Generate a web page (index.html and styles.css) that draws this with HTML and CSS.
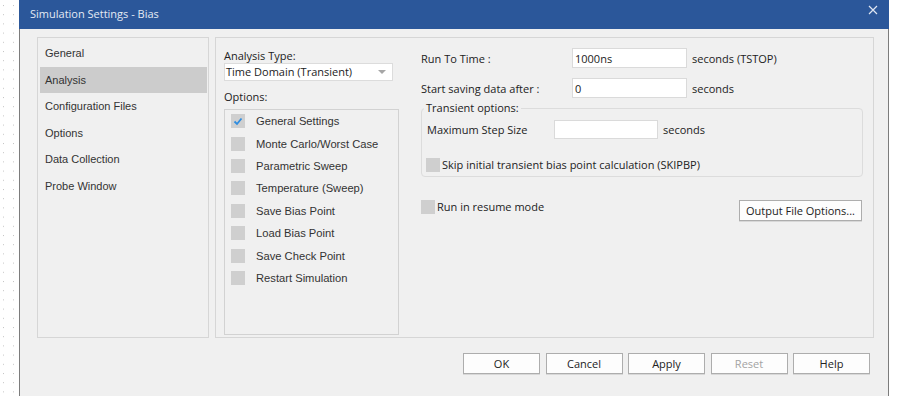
FILE: index.html
```html
<!DOCTYPE html>
<html>
<head>
<meta charset="utf-8" />
<title>Simulation Settings - Bias</title>
<link rel="stylesheet" href="styles.css">
</head>

<body>
<div class="screen">
  <div class="desk">
    <svg width="19" height="396">
      <defs>
        <pattern id="dots" width="10" height="9.2" patternUnits="userSpaceOnUse" x="3" y="5">
          <rect width="1" height="1" fill="#c4c4c4"></rect>
        </pattern>
      </defs>
      <rect width="19" height="396" fill="url(#dots)"></rect>
    </svg>
  </div>

  <div class="dialog">
    <div class="titlebar">
      <span class="title">Simulation Settings - Bias</span>
      <span class="close" title="Close">
        <svg width="10" height="10" viewBox="0 0 10 10"><path d="M1 1 L9 9 M9 1 L1 9" stroke="#dfe6f2" stroke-width="1.2" fill="none"/></svg>
      </span>
    </div>

    <div class="body">
      <div class="panels">
        <!-- 左侧分类 -->
        <ul class="nav">
          <li>General</li>
          <li class="on">Analysis</li>
          <li>Configuration Files</li>
          <li>Options</li>
          <li>Data Collection</li>
          <li>Probe Window</li>
        </ul>

        <div class="main">
          <div class="col-type">
            <div class="lbl">Analysis Type:</div>
            <div class="select">
              <span>Time Domain (Transient)</span>
              <s class="arrow"></s>
            </div>
            <div class="lbl lbl-opt">Options:</div>
            <ul class="optlist">
              <li><i class="chk checked"><svg width="14" height="14" viewBox="0 0 14 14"><path d="M3.5 7.5 L6 10 L10.5 4.5" stroke="#2f8de0" stroke-width="1.8" fill="none"/></svg></i>General Settings</li>
              <li><i class="chk"></i>Monte Carlo/Worst Case</li>
              <li><i class="chk"></i>Parametric Sweep</li>
              <li><i class="chk"></i>Temperature (Sweep)</li>
              <li><i class="chk"></i>Save Bias Point</li>
              <li><i class="chk"></i>Load Bias Point</li>
              <li><i class="chk"></i>Save Check Point</li>
              <li><i class="chk"></i>Restart Simulation</li>
            </ul>
          </div>

          <div class="col-run">
            <div class="row">
              <label class="rlbl" for="tstop">Run To Time :</label>
              <input class="txt" type="text" id="tstop" value="1000ns" />
              <span class="unit">seconds (TSTOP)</span>
            </div>
            <div class="row row2">
              <label class="rlbl" for="tstart">Start saving data after :</label>
              <input class="txt" type="text" id="tstart" value="0" />
              <span class="unit">seconds</span>
            </div>

            <fieldset class="group">
              <legend>Transient options:</legend>
              <div class="grow">
                <label class="glbl" for="maxstep">Maximum Step Size</label>
                <input class="txt txt-step" type="text" id="maxstep" value="" />
                <span class="unit">seconds</span>
              </div>
              <div class="grow gchk">
                <i class="chk"></i><span>Skip initial transient bias point calculation (SKIPBP)</span>
              </div>
            </fieldset>

            <div class="resume">
              <div class="rchk"><i class="chk"></i><span>Run in resume mode</span></div>
              <button class="btn btn-out" type="button">Output File Options...</button>
            </div>
          </div>
        </div>
      </div>

      <div class="btns">
        <button class="btn" type="button">OK</button>
        <button class="btn" type="button">Cancel</button>
        <button class="btn" type="button">Apply</button>
        <button class="btn disabled" type="button">Reset</button>
        <button class="btn" type="button">Help</button>
      </div>
    </div>
  </div>
</div>
</body>
</html>
```

FILE: styles.css
```css
/* 页面 */
html, body {margin: 0; padding: 0; background: #fff;}
body {width: 902px; height: 396px; overflow: hidden; font-family: "Open Sans", "Liberation Sans", sans-serif; font-size: 11px; color: #222;}
ul {margin: 0; padding: 0; list-style: none;}
.screen {display: flex; height: 396px;}
.desk {width: 19px; flex: none;}
.desk svg {display: block;}

/* 对话框 */
.dialog {width: 870px; flex: none; display: flex; flex-direction: column; background: #f0f0f0;}
.titlebar {height: 29px; flex: none; display: flex; align-items: center; justify-content: space-between; padding: 0 11px 0 11px; background: #2b579a; color: #e4eaf4;}
.titlebar .title {font-size: 11px; margin-top: -2px;}
.titlebar .close {display: flex; margin-top: -10px;}
.body {flex: 1; border-left: 1px solid #7c7c7c; border-right: 1px solid #7c7c7c; padding: 8px 14px 0 17px;}
.panels {display: flex; gap: 6px; height: 301px;}

/* 左侧分类 */
.nav {width: 172px; flex: none; box-sizing: border-box; border: 1px solid #d6d6d6; padding: 2px 1px 2px 2px; font-family: "Liberation Sans", Arial, sans-serif; font-size: 11px; color: #333;}
.nav li {height: 26.5px; line-height: 26.5px; padding-left: 5px;}
.nav li.on {background: #cccccc;}

/* 右侧内容 */
.main {flex: 1; display: flex; box-sizing: border-box; border: 1px solid #d6d6d6; padding: 10px 8px 0 8px;}
.col-type {width: 175px; flex: none;}
.lbl {height: 14px; line-height: 14px; margin-top: 1px; color: #222;}
.lbl-opt {margin-top: 9px;}
.select {position: relative; height: 18px; box-sizing: border-box; border: 1px solid #dcdcdc; background: #fff; line-height: 16px; padding-left: 1px; width: 169px;}
.select .arrow {position: absolute; right: 6px; top: 6px; width: 0; height: 0; border-left: 4px solid transparent; border-right: 4px solid transparent; border-top: 4px solid #a6a6a6;}
.optlist {margin-top: 5px; height: 226px; box-sizing: border-box; border: 1px solid #d2d2d2; padding: 0 0 0 6px; font-family: "Liberation Sans", Arial, sans-serif; font-size: 11.2px; color: #333;}
.optlist li {height: 22.4px; display: flex; align-items: center;}
.optlist .chk {margin-right: 11px;}

.chk {display: inline-block; width: 14px; height: 14px; flex: none; background: #cfcfcf;}
.chk svg {display: block;}

.col-run {margin-left: 22px; width: 442px;}
.row {display: flex; align-items: center; height: 20px;}
.row2 {margin-top: 10px;}
.rlbl {width: 151px; flex: none;}
.txt {box-sizing: border-box; width: 115px; height: 20px; margin: 0; border: 1px solid #dadada; background: #fff; padding: 0 2px; font-family: "Open Sans", "Liberation Sans", sans-serif; font-size: 11px; color: #222; outline: none;}
.unit {margin-left: 5px;}

.group {width: 442px; box-sizing: border-box; margin: 3px 0 0 0; padding: 0 2px 4px 2px; border: 1px solid #dcdcdc; border-radius: 4px; min-width: 0;}
.group legend {padding: 0 2px; height: 14px; line-height: 14px;}
.grow {display: flex; align-items: center; padding-left: 3px;}
.grow:first-of-type {margin-top: 5px;}
.glbl {width: 127px; flex: none;}
.txt-step {width: 104px; height: 19px;}
.gchk {margin-top: 18px; padding-left: 2px;}
.gchk span, .rchk span {margin-left: 2px;}

.resume {display: flex; justify-content: space-between; align-items: flex-start; margin-top: 22px;}
.rchk {display: flex; align-items: center;}

/* 按钮 */
.btn {box-sizing: border-box; height: 21px; margin: 0; padding: 0; border: 1px solid #adadad; background: #fdfdfd; box-shadow: 0 1px 0 #d8d8d8; font-family: "Open Sans", "Liberation Sans", sans-serif; font-size: 11px; color: #222; cursor: pointer;}
.btn-out {width: 123px; margin: 1px 1px 0 0;}
.btns {display: flex; justify-content: flex-end; gap: 5.5px; margin-top: 15px; padding-right: 4px;}
.btns .btn {width: 77px;}
.btn.disabled {color: #a3a3a3; cursor: default;}
```
